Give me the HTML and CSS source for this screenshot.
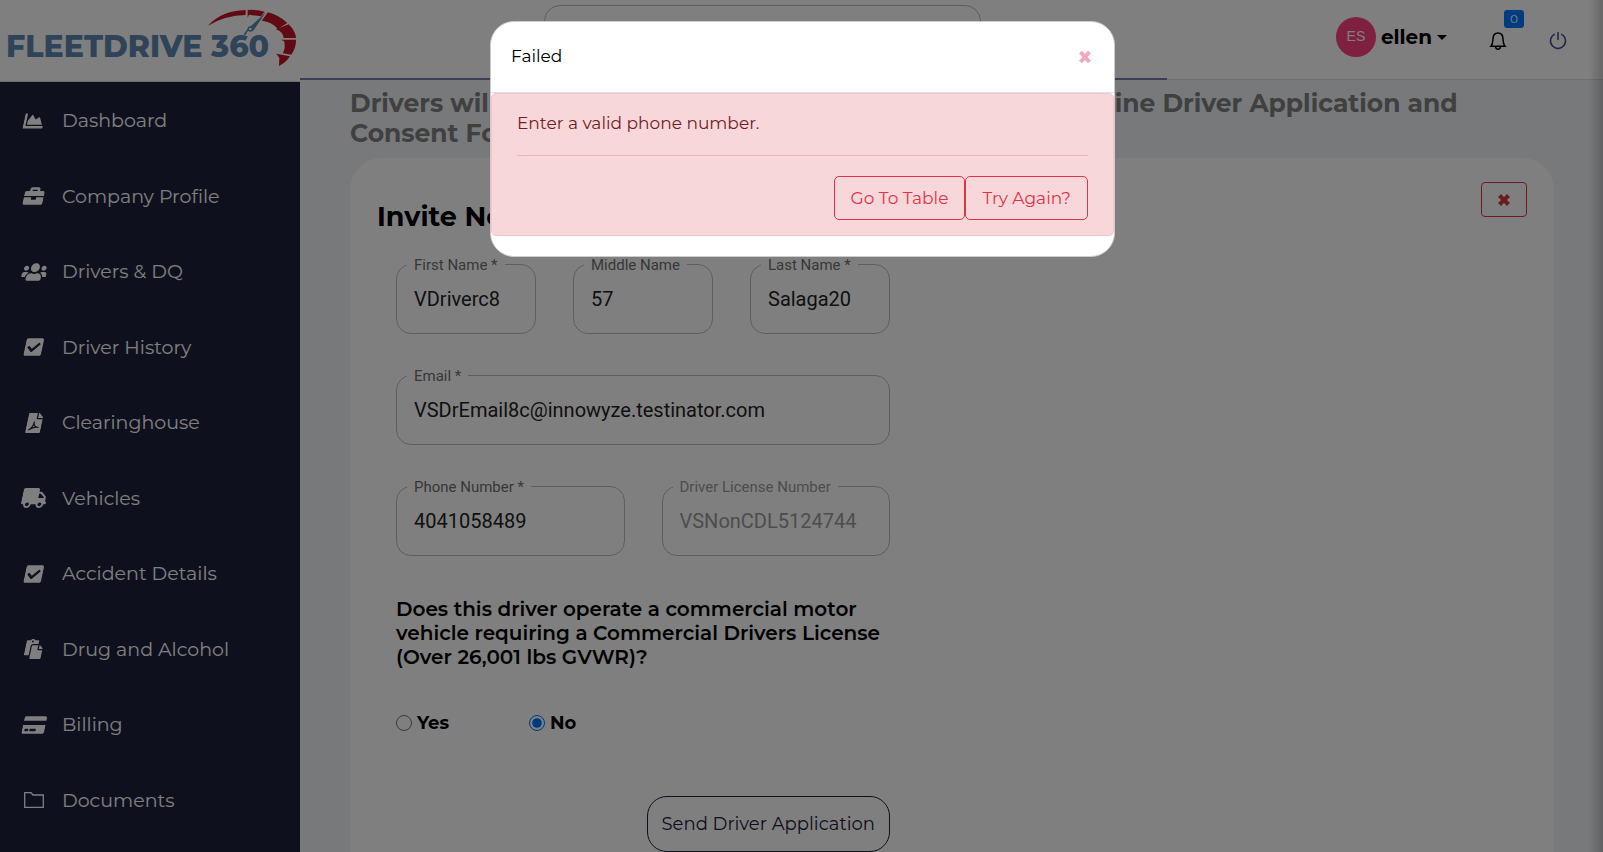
FILE: index.html
```html
<!DOCTYPE html>
<html lang="en">
<head>
<meta charset="utf-8">
<title>FleetDrive 360</title>
<link rel="stylesheet" href="styles.css">
</head>
<body>
<div class="app">
  <aside class="sidebar">
    <a class="logo" href="#" aria-label="FleetDrive 360 home">
      <svg viewBox="0 0 300 81" width="300" height="81">
        <text class="logo-text" x="6" y="57">FLEETDRIVE 360</text>
        <g transform="scale(.3333)">
          <path fill="#c41426" d="M624 77Q664 32 737 30V45Q675 46 624 77zM743 30Q768 28 794 35L783 49L747 44L743 53zM804 37Q838 46 862 69L833 87Q818 66 785 62zM866 73Q887 94 888 114H851Q850 96 828 88zM888 119Q889 143 874 164L849 160Q858 140 852 123L842 119zM870 169Q860 186 837 198L838 173L829 161z"/>
          <path fill="#5e88b2" d="M798 36L760 92L747 88L737 104H730L746 82L752 79z"/>
          <circle cx="751" cy="87" r="6" fill="#fff" stroke="#5e88b2" stroke-width="4"/>
        </g>
      </svg>
    </a>
    <nav class="nav">
      <a href="#"><span class="ico"><svg class="fa" viewBox="0 0 512 512"><path d="M500 384c6.600 0 12 5.400 12 12v40c0 6.600-5.400 12-12 12H12c-6.600 0-12-5.400-12-12V76c0-6.600 5.400-12 12-12h40c6.600 0 12 5.400 12 12v308h436zM372.700 159.500L288 216l-85.300-113.700c-5.100-6.800-15.500-6.300-19.900 1L96 248v104h384l-89.900-187.800c-3.200-6.500-11.400-8.700-17.400-4.700z"/></svg></span>Dashboard</a>
      <a href="#"><span class="ico"><svg class="fa" viewBox="0 0 512 512"><path d="M320 336c0 8.840-7.160 16-16 16h-96c-8.840 0-16-7.160-16-16v-48H0v144c0 25.600 22.400 48 48 48h416c25.600 0 48-22.400 48-48V288H320v48zm144-208h-80V80c0-25.600-22.400-48-48-48H176c-25.600 0-48 22.400-48 48v48H48c-25.600 0-48 22.400-48 48v80h512v-80c0-25.600-22.400-48-48-48zm-144 0H192V96h128v32z"/></svg></span>Company Profile</a>
      <a href="#"><span class="ico"><svg class="fa" viewBox="0 0 640 512"><path d="M96 224c35.300 0 64-28.700 64-64s-28.700-64-64-64-64 28.700-64 64 28.700 64 64 64zm448 0c35.300 0 64-28.700 64-64s-28.700-64-64-64-64 28.700-64 64 28.700 64 64 64zm32 32h-64c-17.600 0-33.500 7.100-45.100 18.600 40.300 22.100 68.900 62 75.100 109.400h66c17.700 0 32-14.300 32-32v-32c0-35.300-28.700-64-64-64zm-256 0c61.900 0 112-50.100 112-112S381.900 32 320 32 208 82.100 208 144s50.100 112 112 112zm76.800 32h-8.300c-20.800 10-43.900 16-68.500 16s-47.600-6-68.500-16h-8.300C179.600 288 128 339.600 128 403.200V432c0 26.500 21.500 48 48 48h288c26.500 0 48-21.500 48-48v-28.800c0-63.600-51.600-115.200-115.200-115.200zm-223.700-13.400C161.500 263.100 145.600 256 128 256H64c-35.300 0-64 28.700-64 64v32c0 17.700 14.300 32 32 32h65.900c6.300-47.400 34.900-87.300 75.200-109.400z"/></svg></span>Drivers &amp; DQ</a>
      <a href="#"><span class="ico"><svg class="fa" viewBox="0 0 448 512"><path d="M400 480H48c-26.500 0-48-21.500-48-48V80c0-26.500 21.500-48 48-48h352c26.500 0 48 21.500 48 48v352c0 26.500-21.500 48-48 48zm-204.700-98.060l184-184c6.250-6.250 6.250-16.380 0-22.630l-22.630-22.630c-6.250-6.250-16.380-6.250-22.630 0L184 302.740l-70.060-70.060c-6.250-6.250-16.380-6.250-22.630 0l-22.630 22.630c-6.250 6.250-6.250 16.380 0 22.630l104 104c6.250 6.250 16.380 6.250 22.630 0z"/></svg></span>Driver History</a>
      <a href="#"><span class="ico"><svg class="fa" viewBox="0 0 384 512"><path d="M224 136V0H24C10.700 0 0 10.700 0 24v464c0 13.300 10.700 24 24 24h336c13.300 0 24-10.700 24-24V160H248c-13.200 0-24-10.800-24-24zM377 105L279 7c-4.500-4.500-10.600-7-17-7h-6v128h128v-6.100c0-6.300-2.500-12.400-7-16.900z"/><path fill="none" stroke="#1e203c" stroke-width="30" stroke-linejoin="round" stroke-linecap="round" d="M80 430C130 410 190 320 182 225C172 310 230 370 310 372C240 340 160 375 80 430z"/></svg></span>Clearinghouse</a>
      <a href="#"><span class="ico"><svg class="fa" viewBox="0 0 640 512"><path d="M624 352h-16V243.900c0-12.700-5.100-24.900-14.100-33.900L494 110.100c-9-9-21.200-14.100-33.900-14.100H416V48c0-26.500-21.500-48-48-48H48C21.500 0 0 21.500 0 48v320c0 26.500 21.500 48 48 48h16c0 53 43 96 96 96s96-43 96-96h128c0 53 43 96 96 96s96-43 96-96h48c8.800 0 16-7.200 16-16v-32c0-8.800-7.200-16-16-16zM160 464c-26.500 0-48-21.500-48-48s21.500-48 48-48 48 21.500 48 48-21.500 48-48 48zm320 0c-26.500 0-48-21.500-48-48s21.500-48 48-48 48 21.500 48 48-21.500 48-48 48zm80-208H416V144h44.100l99.900 99.900V256z"/></svg></span>Vehicles</a>
      <a href="#"><span class="ico"><svg class="fa" viewBox="0 0 448 512"><path d="M400 480H48c-26.500 0-48-21.500-48-48V80c0-26.500 21.500-48 48-48h352c26.500 0 48 21.500 48 48v352c0 26.500-21.500 48-48 48zm-204.700-98.060l184-184c6.250-6.250 6.250-16.380 0-22.630l-22.630-22.630c-6.250-6.250-16.380-6.250-22.630 0L184 302.740l-70.060-70.060c-6.250-6.250-16.380-6.250-22.630 0l-22.630 22.630c-6.250 6.250-6.250 16.380 0 22.630l104 104c6.250 6.250 16.380 6.250 22.630 0z"/></svg></span>Accident Details</a>
      <a href="#"><span class="ico"><svg class="fa" viewBox="0 0 448 512"><path d="M128 184c0-30.900 25.100-56 56-56h136V56c0-13.300-10.700-24-24-24h-80.600C204.300 12.900 183.600 0 160 0s-44.300 12.900-55.400 32H24C10.700 32 0 42.700 0 56v336c0 13.300 10.700 24 24 24h104V184zm32-144c13.300 0 24 10.700 24 24s-10.700 24-24 24-24-10.700-24-24 10.700-24 24-24zm184 248h104v200c0 13.300-10.700 24-24 24H184c-13.300 0-24-10.700-24-24V184c0-13.300 10.700-24 24-24h136v104c0 13.200 10.800 24 24 24zm104-38v6h-96v-96h6a24 24 0 0 1 17 7l66 66a24 24 0 0 1 7 17z"/></svg></span>Drug and Alcohol</a>
      <a href="#"><span class="ico"><svg class="fa" viewBox="0 0 576 512"><path d="M0 432c0 26.500 21.500 48 48 48h480c26.500 0 48-21.500 48-48V256H0v176zm192-68c0-6.600 5.400-12 12-12h136c6.600 0 12 5.400 12 12v40c0 6.600-5.400 12-12 12H204c-6.600 0-12-5.400-12-12v-40zm-128 0c0-6.600 5.400-12 12-12h72c6.600 0 12 5.400 12 12v40c0 6.600-5.400 12-12 12H76c-6.600 0-12-5.400-12-12v-40zM576 80v68H0V80c0-26.500 21.500-48 48-48h480c26.500 0 48 21.500 48 48z"/></svg></span>Billing</a>
      <a href="#"><span class="ico"><svg width="20" height="16" viewBox="0 0 20 16" fill="none" stroke="currentColor" stroke-width="1.300"><path d="M.7.700H7L9 3H19.300V15.300H.7z"/></svg></span>Documents</a>
    </nav>
  </aside>

  <div class="main">
    <header class="topbar">
      <input class="search" type="search" aria-label="Search">
      <div class="tools">
        <button class="user" type="button"><span class="avatar">ES</span>ellen<span class="caret"></span></button>
        <button class="tool" type="button" aria-label="Notifications">
          <svg width="18" height="18" viewBox="-1 0 18 18" fill="none" stroke="#000" stroke-width="1.500"><path d="M1 14.300C3 12 2.800 9.500 3 6.500C3.200 3 5 1 8 1S12.800 3 13 6.500C13.200 9.500 13 12 15 14.300zM5.600 14.500C5.800 18 10.200 18 10.400 14.500"/></svg>
          <span class="badge">0</span>
        </button>
        <button class="tool" type="button" aria-label="Log out">
          <svg width="18" height="18" viewBox="0 0 18 18" fill="none" stroke="#4a4a94" stroke-width="1.500"><path d="M5.800 2.100A7.500 7.500 0 1 0 12.200 2.100M9 0V8"/></svg>
        </button>
      </div>
      <div class="progress"></div>
    </header>

    <main class="content">
      <h2 class="lead">Drivers will receive an email that contains a link to our Online Driver Application and Consent Forms</h2>
      <section class="card">
        <div class="card-head">
          <h1>Invite New Driver</h1>
          <button class="close-card" type="button" aria-label="Close">
            <svg width="14" height="14" viewBox="0 0 14 14"><path d="M2.500 2.500L11.500 11.500M11.500 2.500L2.500 11.500" stroke="currentColor" stroke-width="4.200"/></svg>
          </button>
        </div>
        <form class="form">
          <div class="row three">
            <div class="field"><label for="first">First Name *</label><input id="first" value="VDriverc8"></div>
            <div class="field"><label for="middle">Middle Name</label><input id="middle" value="57"></div>
            <div class="field"><label for="last">Last Name *</label><input id="last" value="Salaga20"></div>
          </div>
          <div class="row">
            <div class="field"><label for="email">Email *</label><input id="email" type="email" value="VSDrEmail8c@innowyze.testinator.com"></div>
          </div>
          <div class="row two">
            <div class="field"><label for="phone">Phone Number *</label><input id="phone" type="tel" value="4041058489"></div>
            <div class="field off"><label for="license">Driver License Number</label><input id="license" value="VSNonCDL5124744" disabled></div>
          </div>
          <p class="question">Does this driver operate a commercial motor vehicle requiring a Commercial Drivers License (Over 26,001 lbs GVWR)?</p>
          <div class="choices">
            <label><input type="radio" name="cdl">Yes</label>
            <label><input type="radio" name="cdl" checked>No</label>
          </div>
          <button class="send" type="button">Send Driver Application</button>
        </form>
      </section>
    </main>
  </div>
</div>

<div class="edge"></div>
<div class="backdrop">
  <div class="modal" role="dialog" aria-labelledby="dialog-title">
    <div class="modal-head">
      <span id="dialog-title">Failed</span>
      <button class="close-modal" type="button" aria-label="Close">
        <svg width="14" height="14" viewBox="0 0 14 14"><path d="M2.500 2L11.500 12M11.500 2L2.500 12" stroke="currentColor" stroke-width="4"/></svg>
      </button>
    </div>
    <div class="alert" role="alert">
      <p>Enter a valid phone number.</p>
      <hr>
      <div class="actions">
        <button type="button">Go To Table</button>
        <button type="button">Try Again?</button>
      </div>
    </div>
  </div>
</div>
</body>
</html>
```
FILE: styles.css
```css
* { box-sizing: border-box; }
body {
  margin: 0;
  height: 100vh;
  overflow: hidden;
  background: #eef2f6;
  color: #000;
  font-family: Montserrat, Inter, sans-serif;
  font-size: 18px;
}
button, input { font: inherit; }
button { cursor: pointer; padding: 0; border: 0; background: none; }
h1, h2, p { margin: 0; }
svg { display: block; }

.app { display: flex; height: 100vh; }

/* Sidebar */
.sidebar {
  flex: 0 0 300px;
  display: flex;
  flex-direction: column;
  background: #1e203c;
}
.logo { display: block; background: #fff; border-bottom: 1px solid #d8d8de; }
.logo-text {
  font: 800 30px Montserrat, Inter, sans-serif;
  fill: #5e88b2;
}
.nav { flex: 1; display: flex; flex-direction: column; padding: 1px 0 14px; }
.nav a {
  flex: 1;
  display: flex;
  align-items: center;
  padding-left: 21px;
  gap: 15px;
  color: #fff;
  font-size: 19px;
  font-weight: 400;
  text-decoration: none;
}
.ico { width: 26px; display: flex; justify-content: center; }
.fa { height: 20px; fill: #fff; transform: skewX(-12deg); }

/* Top bar */
.main { flex: 1; min-width: 0; display: flex; flex-direction: column; }
.topbar {
  flex: 0 0 80px;
  position: relative;
  display: flex;
  justify-content: space-between;
  align-items: flex-start;
  padding: 5px 36px 0 244px;
  background: #fff;
  border-bottom: 1px solid #dcdee2;
}
.progress {
  position: absolute;
  left: 0;
  bottom: -1px;
  width: 867px;
  max-width: 100%;
  height: 2px;
  background: #7a7ab0;
}
.search {
  width: 437px;
  height: 64px;
  border: 1px solid #bbb;
  border-radius: 16px;
  background: #fff;
}
.tools { display: flex; align-items: center; height: 64px; }
.user { display: flex; align-items: center; font-size: 20px; font-weight: 700; }
.avatar {
  width: 40px;
  height: 40px;
  margin-right: 5px;
  border-radius: 50%;
  background: #ff4081;
  color: #fff;
  font: 14px/38px "Liberation Sans", Arial, sans-serif;
}
.caret {
  margin-left: 5px;
  border: 5px solid transparent;
  border-top-color: #000;
  border-bottom: 0;
}
.tool { margin-left: 42px; padding-top: 8px; position: relative; }
.badge {
  position: absolute;
  left: 15px;
  bottom: 22px;
  width: 20px;
  height: 18px;
  border-radius: 3px;
  background: #007bff;
  color: #fff;
  font-size: 12px;
  line-height: 18px;
}

/* Page */
.content {
  flex: 1;
  display: flex;
  flex-direction: column;
  padding: 8px 49px 0 50px;
  min-height: 0;
}
.lead {
  margin-bottom: 10px;
  color: #808080;
  font-size: 25px;
  line-height: 30px;
  font-weight: 700;
}
.card {
  flex: 1 0 auto;
  padding: 24px 27px 0;
  border-radius: 32px 32px 0 0;
  background: #fff;
}
.card-head { display: flex; justify-content: space-between; align-items: flex-start; }
h1 { padding-top: 19px; font-size: 27px; line-height: 32px; font-weight: 700; }
.close-card {
  display: grid;
  place-items: center;
  width: 46px;
  height: 35px;
  border: 1px solid #dc3545;
  border-radius: 4px;
  color: #dc3545;
}
.form { max-width: 513px; padding: 31px 0 0 19px; display: flex; flex-direction: column; }
.row { display: grid; gap: 37px; margin-bottom: 41px; }
.three { grid-template-columns: repeat(3, 1fr); }
.two { grid-template-columns: repeat(2, 1fr); }
.field {
  position: relative;
  min-width: 0;
  height: 70px;
  border: 1px solid #bcbcbc;
  border-radius: 15px;
  font-family: Roboto, sans-serif;
}
.field label {
  position: absolute;
  left: 10px;
  top: -9px;
  padding: 0 7px;
  background: #fff;
  color: #707070;
  font-size: 15px;
  line-height: 18px;
  white-space: nowrap;
}
.field input {
  width: 100%;
  height: 100%;
  padding: 0 17px;
  border: 0;
  border-radius: 15px;
  background: transparent;
  color: #222;
  font-size: 20px;
}
.off label { color: #9a9a9a; }
.off input { color: #9a9a9a; }
.question { font-size: 20px; line-height: 24px; font-weight: 600; }
.choices { display: flex; gap: 80px; margin: 43px 0 62px; font-weight: 700; }
.choices label { display: flex; align-items: center; gap: 5px; line-height: 22px; }
.choices input { width: 16px; height: 16px; margin: 0; }
.send {
  align-self: flex-end;
  height: 56px;
  padding: 0 14px;
  border: 1px solid #1e203c;
  border-radius: 20px;
  color: #1e203c;
  font-weight: 400;
}

.edge {
  position: fixed;
  right: 0;
  top: 0;
  bottom: 0;
  width: 14px;
  background: linear-gradient(to right, transparent, rgba(0, 0, 0, .2));
}

/* Dialog */
.backdrop {
  position: fixed;
  inset: 0;
  display: flex;
  justify-content: center;
  align-items: flex-start;
  padding: 21px 0 0 2px;
  background: rgba(0, 0, 0, .5);
}
.modal {
  width: 625px;
  padding-bottom: 20px;
  border: 1px solid #ccc;
  border-radius: 24px;
  background: #fff;
}
.modal-head {
  display: flex;
  justify-content: space-between;
  align-items: center;
  height: 71px;
  padding: 0 22px 2px 20px;
  border-bottom: 1px solid #dee2e6;
}
.close-modal { color: #f2a9c0; padding-top: 2px; }
.alert {
  padding: 16px 25px 15px;
  border: 1px solid #f5c6cb;
  border-radius: 5px;
  background: #f8d7da;
  color: #721c24;
}
.alert p { line-height: 27px; }
.alert hr { margin: 18px 0 20px; border: 0; border-top: 1px solid #f1b0b7; }
.actions { display: flex; justify-content: flex-end; }
.actions button {
  height: 44px;
  padding: 0 16px;
  border: 1px solid #dc3545;
  border-radius: 5px;
  color: #dc3545;
  font-weight: 400;
}
.modal-head, .alert p, .actions button { font-size: 17px; }
```
